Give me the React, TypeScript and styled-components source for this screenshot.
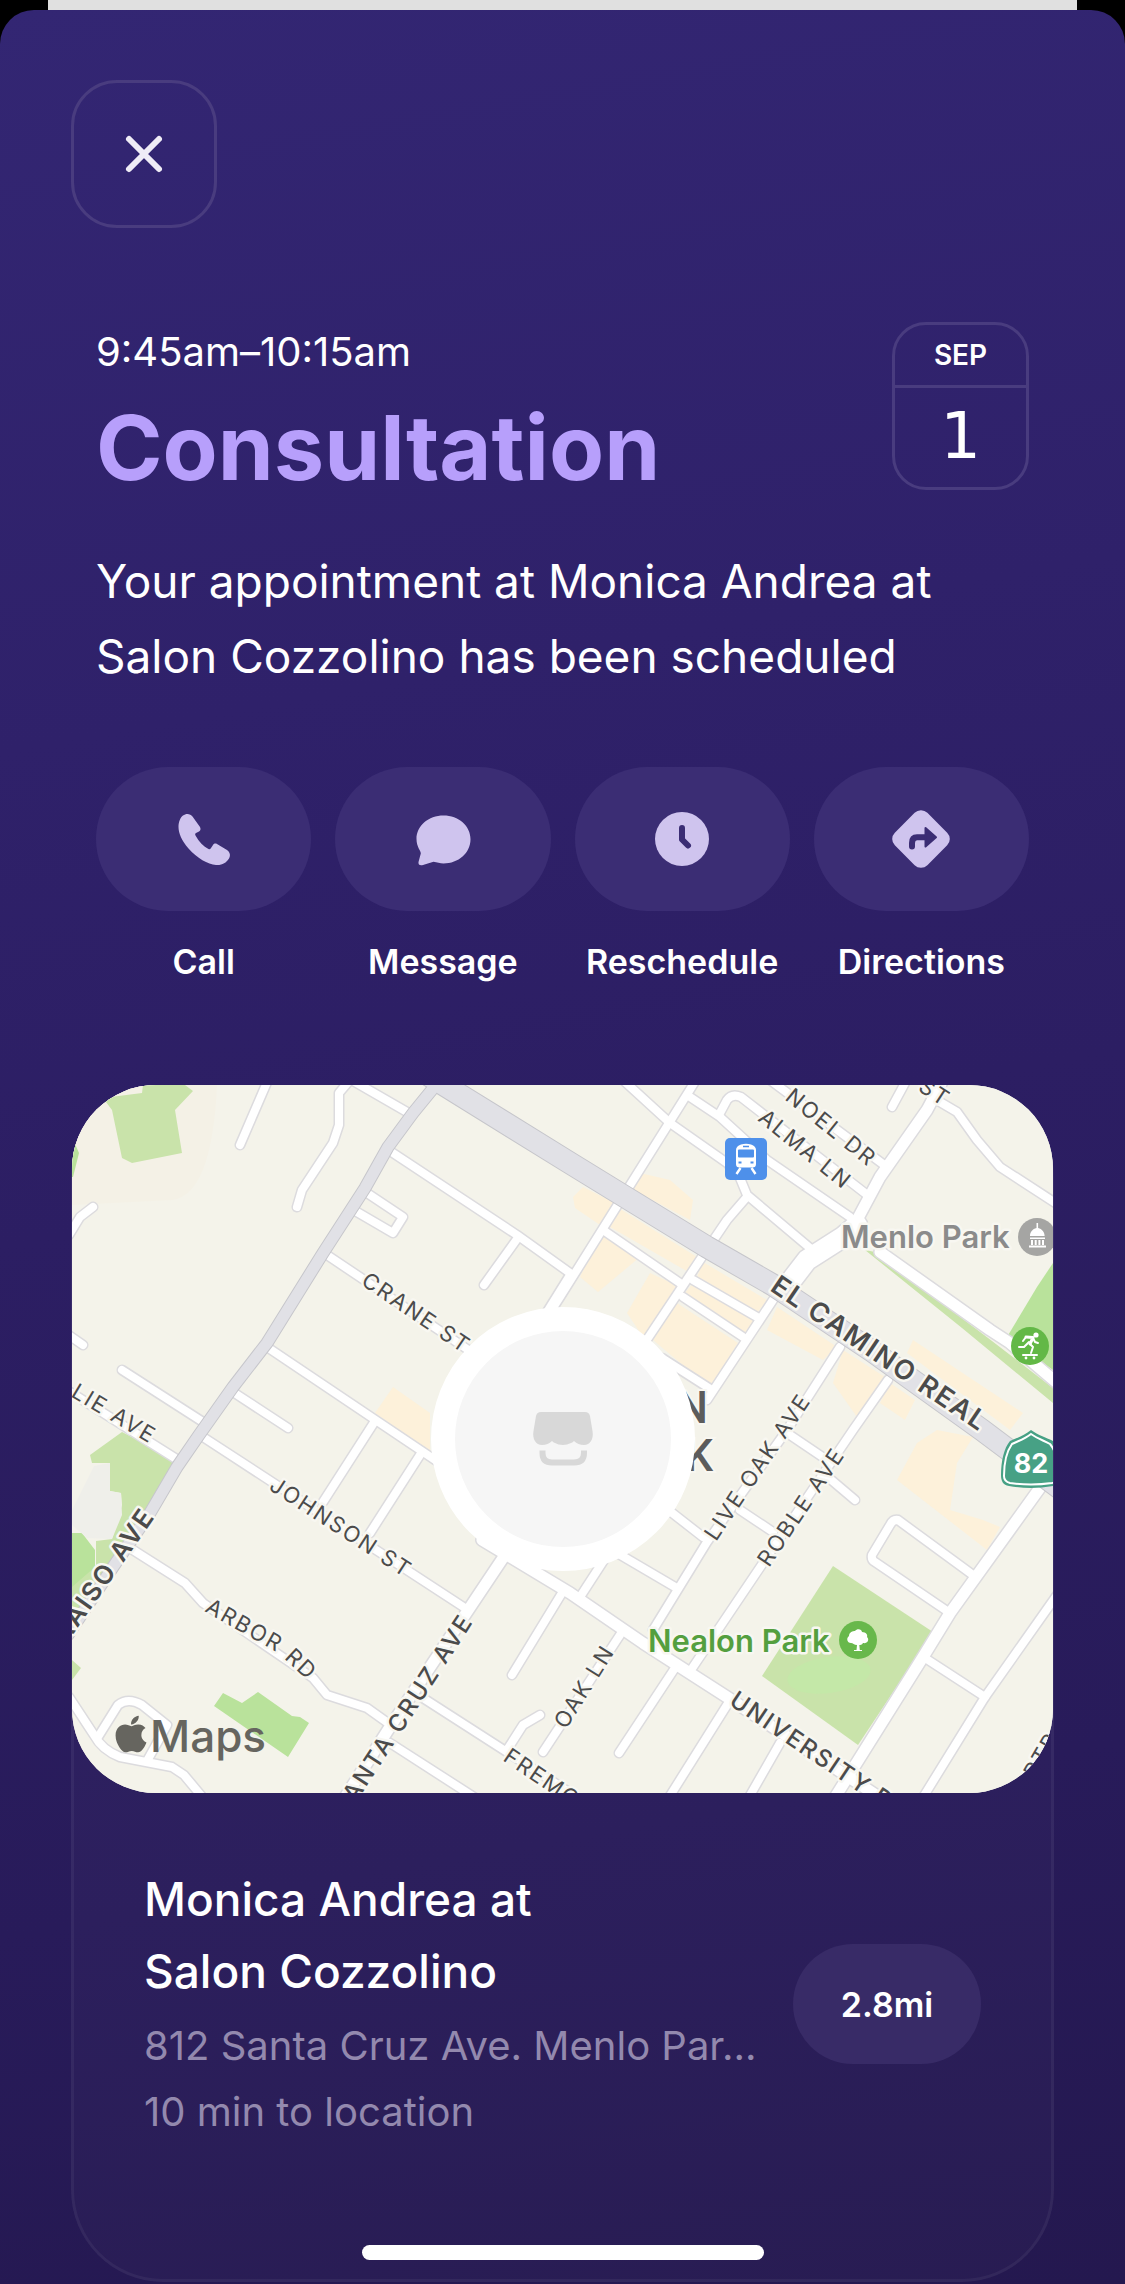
import React from "react";
import styled, { createGlobalStyle } from "styled-components";
import { FaApple } from "react-icons/fa";

const GlobalStyle = createGlobalStyle`
  *, *::before, *::after { box-sizing: border-box; }
  body {
    margin: 0;
    background: #000;
    color: #fff;
    font-family: Inter, "Liberation Sans", sans-serif;
    -webkit-font-smoothing: antialiased;
  }
  h1, h2, p { margin: 0; }
  button { font: inherit; color: inherit; }
`;

const Screen = styled.div`
  position: relative;
  display: flex;
  flex-direction: column;
  min-height: 100vh;
`;

const PreviousSheet = styled.div`
  height: 10px;
  margin: 0 48px;
  background: #e0e0e0;
`;

const Sheet = styled.main`
  flex: 1;
  display: flex;
  flex-direction: column;
  padding: 70px 71px 2px;
  border-radius: 34px 34px 0 0;
  background: linear-gradient(170deg, #332673 0%, #2f216a 30%, #2c1e63 50%, #281b5a 78%, #24184f 100%);
`;

const CloseButton = styled.button`
  display: grid;
  place-items: center;
  width: 146px;
  height: 148px;
  padding: 0;
  border: 3px solid #493c7f;
  border-radius: 46px;
  background: transparent;
  cursor: pointer;
`;

const Summary = styled.section`
  display: flex;
  flex-direction: column;
  padding: 94px 25px 0;
`;

const Heading = styled.header`
  display: flex;
  justify-content: space-between;
  align-items: flex-start;
`;

const Titles = styled.div`
  display: flex;
  flex-direction: column;
  gap: 24px;
  padding-top: 6px;
`;

const Time = styled.p`
  font-size: 40px;
  line-height: 48px;
`;

const Title = styled.h1`
  color: #b79ffb;
  font-size: 90px;
  font-weight: 700;
  line-height: 96px;
`;

const DateBadge = styled.time`
  display: flex;
  flex-direction: column;
  width: 137px;
  height: 168px;
  border: 3px solid #493c7f;
  border-radius: 34px;
  text-align: center;
`;

const Month = styled.span`
  border-bottom: 3px solid #493c7f;
  font-size: 28px;
  font-weight: 600;
  line-height: 60px;
`;

const Day = styled.span`
  font-family: "DejaVu Sans", sans-serif;
  font-size: 64px;
  line-height: 96px;
`;

const Message = styled.p`
  padding-top: 48px;
  font-size: 46px;
  line-height: 75px;
`;

const Actions = styled.nav`
  display: grid;
  grid-template-columns: repeat(4, 1fr);
  gap: 24px;
  padding-top: 73px;
`;

const ActionButton = styled.button`
  display: flex;
  flex-direction: column;
  align-items: stretch;
  gap: 31px;
  min-width: 0;
  padding: 0;
  border: 0;
  background: transparent;
  font-size: 34px;
  font-weight: 600;
  line-height: 40px;
  white-space: nowrap;
  cursor: pointer;
`;

const Pill = styled.span`
  display: grid;
  place-items: center;
  height: 144px;
  border-radius: 72px;
  background: #3b2d74;
  color: #cfc4ee;
`;

const Card = styled.section`
  display: flex;
  flex-direction: column;
  margin-top: 103px;
  border-radius: 92px;
  background: rgba(255, 255, 255, 0.02);
  box-shadow: inset 0 0 0 3px rgba(255, 255, 255, 0.05);
`;

const MapFrame = styled.div`
  position: relative;
  aspect-ratio: 981 / 708;
  margin: 0 1px;
  border-radius: 84px;
  overflow: hidden;
  background: #f4f3ea;
`;

const MapDrawing = styled.svg`
  display: block;
  width: 100%;
  height: 100%;
  font-family: Inter, "Liberation Sans", sans-serif;
`;

const Marker = styled.div`
  position: absolute;
  inset: 0;
  width: 264px;
  height: 264px;
  margin: auto;
  display: grid;
  place-items: center;
  border: 24px solid #fff;
  border-radius: 50%;
  background: #f6f6f6;
  color: #d8d8d8;
`;

const Place = styled.div`
  display: flex;
  align-items: center;
  justify-content: space-between;
  gap: 36px;
  padding: 70px 73px 137px;
`;

const PlaceText = styled.div`
  min-width: 0;
`;

const PlaceName = styled.h2`
  padding-bottom: 6px;
  font-size: 46px;
  font-weight: 500;
  line-height: 72px;
`;

const PlaceLine = styled.p`
  color: #9389ae;
  font-size: 40px;
  line-height: 66px;
  white-space: nowrap;
`;

const Distance = styled.button`
  flex: none;
  width: 188px;
  height: 120px;
  padding: 0;
  border: 0;
  border-radius: 60px;
  background: #382b67;
  font-size: 34px;
  font-weight: 600;
  cursor: pointer;
`;

const HomeIndicator = styled.div`
  position: absolute;
  bottom: 24px;
  left: 50%;
  width: 402px;
  height: 15px;
  margin-left: -201px;
  border-radius: 8px;
  background: #fff;
`;

const Icon = ({ children }: { children: React.ReactNode }) => (
  <svg width="64" height="64" viewBox="0 0 64 64" fill="currentColor" aria-hidden="true">
    {children}
  </svg>
);

const actions = [
  {
    label: "Call",
    icon: (
      <path d="M11 8.500 C14 6 18.500 6.500 20.500 9.500 L28 20 C29 22 28.500 23.500 27 24.500 L24 26 C23 26.500 23 27.500 23.500 28.500 C27 35 31.500 39.500 36.500 42 C38 42.500 38.500 42 39 41 L41 38 C42 36.500 43.500 36.300 45 37 L55 43 C58.500 45.500 58.500 49 57 51.500 C54 56 50 58.500 44 58 C36 57.500 25 51 16.500 41.500 C9.500 33.500 6.500 26 6.500 20 C6.500 14.500 8.500 10.500 11 8.500 Z" />
    ),
  },
  {
    label: "Message",
    icon: (
      <path d="M32.500 8.500 C47.500 8.500 59.500 18.800 59.500 32.300 C59.500 46 47.500 56.500 32.500 56.500 C29 56.500 26 55.500 22.500 54.800 L12 58 C9 59 7 57.500 7.500 55 L9.800 46.500 C9.800 43.500 5.500 40 5.500 32 C5.500 18.800 17.500 8.500 32.500 8.500 Z" />
    ),
  },
  {
    label: "Reschedule",
    icon: (
      <>
        <circle cx="32" cy="32" r="27" />
        <path d="M32 21 V32.500 L38 38.500" fill="none" stroke="#3b2d74" strokeWidth="6" strokeLinecap="round" strokeLinejoin="round" />
      </>
    ),
  },
  {
    label: "Directions",
    icon: (
      <>
        <rect x="9" y="9" width="46" height="46" rx="9" transform="rotate(45 32 32)" />
        <path d="M23 39.500 V36 C23 32 25 30.300 28 30.300 H38" fill="none" stroke="#3b2d74" strokeWidth="6" strokeLinecap="round" />
        <path d="M36.500 21 L47 30.300 L36.500 39.500 Z" fill="#3b2d74" stroke="#3b2d74" strokeWidth="2" strokeLinejoin="round" />
      </>
    ),
  },
];

const commercial = [
  "568,88 598,95 621,115 618,135 558,103",
  "501,112 511,102 541,117 531,142 503,123",
  "545,122 625,172 618,188 538,142",
  "528,148 568,172 526,207 508,192",
  "578,188 608,202 571,252 555,228",
  "631,177 695,215 685,228 625,192",
  "621,198 685,235 673,252 613,208",
  "605,218 666,258 638,303 581,255",
  "705,222 765,262 751,275 695,245",
  "771,265 813,292 798,315 785,332 761,298",
  "818,298 843,315 833,335 808,318",
  "841,255 951,328 938,345 835,268",
  "845,358 865,345 901,352 885,378 878,425 911,435 928,442 915,465 825,395",
  "321,302 358,328 358,368 303,328",
];

const parks = [
  "31,13 70,8 71,0 113,0 121,6 103,25 110,68 60,78 50,73 40,25",
  "50,347 105,375 60,455 0,535 0,500 24,480 24,456 40,454 50,420 49,408 38,406 38,378 20,378 18,370",
  "0,575 9,583 0,595",
  "761,481 861,547 786,660 690,591",
  "793,165 803,167 850,203 920,256 981,303 981,318 890,243",
];

const gardens = [
  "0,52 7,68 1,92 0,92",
  "0,448 10,448 23,465 23,482 0,502",
  "151,608 170,618 186,607 220,631 228,632 237,638 216,672 142,621",
  "981,178 965,202 935,252 981,285",
];

const streets = [
  "M196 -5 L168 60",
  "M278 -5 L267 8 V40 L261 58 L230 105 L225 122",
  "M283 -3 L335 27",
  "M321 68 L445 150 L498 188",
  "M445 154 L412 200",
  "M498 190 L470 235",
  "M295 108 L331 132 L321 148 L285 127",
  "M255 170 L401 268",
  "M195 262 L308 338 L375 383",
  "M303 336 L251 417",
  "M348 370 L298 448",
  "M161 307 L216 343",
  "M50 285 L131 337",
  "M-5 249 L11 260",
  "M-3 150 L8 132 L21 122",
  "M-5 305 L106 375",
  "M131 352 L393 523",
  "M61 465 L113 498 L131 518 L241 593 L255 610 L295 623 L316 638",
  "M318 658 L405 714",
  "M351 613 L435 667 L520 722",
  "M490 508 L440 590",
  "M468 630 L451 640 L435 665",
  "M471 667 L548 550",
  "M603 583 L547 668",
  "M655 620 L596 714",
  "M708 658 L676 714",
  "M545 455 L508 512",
  "M540 465 L603 502",
  "M590 420 L631 452",
  "M581 545 L635 457 L715 345 L768 262",
  "M621 582 L691 478 L781 345 L816 295",
  "M668 425 L701 447",
  "M718 350 L755 375 M757 393 L783 415",
  "M901 490 L826 435 Q821 434 818 440 L800 470 Q799 475 803 477 L878 528",
  "M985 510 L913 612 L850 714",
  "M853 573 L913 612",
  "M551 -5 L598 38 L655 78 L668 93 L675 110 L738 163",
  "M624 -5 L488 212 L470 240",
  "M618 12 L648 32 L695 75 L778 132",
  "M648 28 L655 15 Q660 8 669 12 L798 112",
  "M698 -5 L815 82",
  "M833 -2 L820 22",
  "M868 17 L885 27 L905 55 L928 82 L985 119",
  "M674 113 L655 135 L630 172 L570 262",
  "M531 145 L608 198 M621 195 L685 232",
  "M611 212 L671 252",
  "M590 273 L640 305",
  "M701 215 L635 315",
  "M-3 612 L22 650 Q30 665 48 672 L100 682 L112 690 L132 714",
  "M26 652 L46 620 Q56 612 70 620 L95 640 L75 676",
];

const avenues = [
  "M871 -5 L855 25 L808 92 L785 135",
  "M808 167 L918 245 L938 258 L985 298",
  "M450 445 L431 473 L316 645 L272 714",
  "M410 455 L498 508 L571 558 L655 612 L810 714",
  "M970 400 L878 528 L851 572 L762 714",
];

const parkway = "M372 -10 L341 28 L316 62 L293 103 L251 168 L195 258 L161 302 L127 350 L105 382 L78 428 L41 482 L-4 550";
const highway = "M350 -14 L372 0 L498 78 L555 113 L635 162 L701 200 L800 266 L910 345 L990 405";
const crossing = "M785 140 L771 152 L735 175 L712 205";

type Label = [text: string, x: number, y: number, angle: number, size: number, weight: number, anchor: "start" | "end"];

const labels: Label[] = [
  ["CRANE ST", 288, 199, 34, 22, 400, "start"],
  ["LIE AVE", -2, 311, 31, 22, 400, "start"],
  ["JOHNSON ST", 196, 404, 33, 22, 400, "start"],
  ["SANTA CRUZ AVE", 402, 536, -57, 24, 500, "end"],
  ["RAISO AVE", 84, 431, -55, 26, 600, "end"],
  ["FREMO", 430, 675, 34, 22, 400, "start"],
  ["OAK LN", 494, 645, -58, 22, 400, "start"],
  ["LIVE OAK AVE", 644, 457, -56, 22, 400, "start"],
  ["ROBLE AVE", 697, 483, -56, 22, 400, "start"],
  ["UNIVERSITY D", 656, 619, 34, 24, 500, "start"],
  ["EL CAMINO REAL", 697, 205, 34, 27, 600, "start"],
  ["NOEL DR", 712, 14, 39, 22, 400, "start"],
  ["ALMA LN", 685, 35, 39, 22, 400, "start"],
  ["ST", 845, 5, 33, 22, 400, "start"],
  ["RTR", 964, 695, -60, 22, 400, "start"],
];

const AreaMap = () => (
  <MapDrawing viewBox="0 0 981 708" preserveAspectRatio="xMidYMid slice" role="img" aria-label="Map of Menlo Park">
    <rect width="981" height="708" fill="#f4f3ea" />
    <path d="M0 0 H145 Q140 110 100 115 L0 120 Z" fill="#f4f1e6" />
    <g fill="#fdf1da">{commercial.map((p) => <polygon key={p} points={p} />)}</g>
    <g fill="#c9e3aa">{parks.map((p) => <polygon key={p} points={p} />)}</g>
    <g fill="#b9e29b">{gardens.map((p) => <polygon key={p} points={p} />)}</g>
    <ellipse cx="757" cy="590" rx="42" ry="18" fill="#c4e8a8" transform="rotate(-8 757 590)" />
    <polygon points="22,381 38,378 38,406 49,408 50,430 40,454 15,453 0,440 0,425" fill="#efefea" />

    <g fill="none" strokeLinecap="round" strokeLinejoin="round">
      <g stroke="#dcdbde">
        <g strokeWidth="11">{streets.map((d) => <path key={d} d={d} />)}</g>
        <g strokeWidth="14">{avenues.map((d) => <path key={d} d={d} />)}</g>
        <path d={crossing} strokeWidth="23" />
      </g>
      <g stroke="#fff">
        <g strokeWidth="8">{streets.map((d) => <path key={d} d={d} />)}</g>
        <g strokeWidth="11">{avenues.map((d) => <path key={d} d={d} />)}</g>
        <path d={crossing} strokeWidth="20" />
      </g>
      <g stroke="#c6c6cb">
        <path d={parkway} strokeWidth="13" />
        <path d={highway} strokeWidth="23" />
      </g>
      <g stroke="#e1e1e6">
        <path d={parkway} strokeWidth="11" />
        <path d={highway} strokeWidth="21" />
      </g>
    </g>

    <g fill="#4b4b4b" stroke="#f8f7f1" strokeWidth="5" strokeLinejoin="round" paintOrder="stroke" letterSpacing="2">
      {labels.map(([text, x, y, angle, size, weight, anchor]) => (
        <text key={text} transform={`translate(${x} ${y}) rotate(${angle})`} fontSize={size} fontWeight={weight} textAnchor={anchor}>
          {text}
        </text>
      ))}
      <path id="arbor" d="M132 526 L206 568 L262 620" fill="none" stroke="none" />
      <text fontSize="22">
        <textPath href="#arbor">ARBOR RD</textPath>
      </text>
    </g>

    <g fill="#5c5c5c" stroke="#f8f7f1" strokeWidth="4" paintOrder="stroke" fontFamily="Roboto, sans-serif" fontSize="44" fontWeight="500" textAnchor="end">
      <text x="636" y="338">N</text>
      <text x="641" y="386">K</text>
    </g>

    <g stroke="#f8f7f1" strokeWidth="5" strokeLinejoin="round" paintOrder="stroke" fontSize="31" fontWeight="600">
      <text x="769" y="163" fill="#8b8b8b">Menlo Park</text>
      <text x="576" y="567" fill="#549f3f">Nealon Park</text>
    </g>

    <circle cx="965" cy="152" r="19" fill="#a5a5a3" />
    <g fill="#fff">
      <path d="M964.500 138 h1.600 v5 c4 1 6.500 4 6.500 8 h-14.600 c0 -4 2.500 -7 6.500 -8 Z" />
      <path d="M958 152.500 h15 v1.500 h-15 Z M959 155 h2 v5 h-2 Z M962.700 155 h2 v5 h-2 Z M966.400 155 h2 v5 h-2 Z M970 155 h2 v5 h-2 Z M957 160.500 h17 v2 h-17 Z" />
    </g>

    <circle cx="786" cy="555" r="19" fill="#68b84b" />
    <path d="M784.500 565 L785 560 C782 560 781 558 779 558 C775 558 774 553 777 551 C777 547 781 546 783 546 C785 543 790 544 790 547 C794 547 796 550 795 552 C798 555 795 559 791 558 C790 560 788 560 787.300 560 L787.800 565 H790 V566 H782 V565 Z" fill="#fff" />

    <circle cx="958" cy="261" r="19" fill="#63b846" />
    <circle cx="964" cy="250" r="2.600" fill="#fff" />
    <path d="M954 252 L961 252.500 L958 259" fill="none" stroke="#fff" strokeWidth="3" strokeLinecap="round" strokeLinejoin="round" />
    <path d="M947 262 L952 262 L957 257 M958 259 L961 262 L959 268 M954 252 L951 256 M961 253 L963 257 L966 258 M951 270 H965" fill="none" stroke="#fff" strokeWidth="2" strokeLinecap="round" strokeLinejoin="round" />
    <circle cx="954" cy="273" r="1.400" fill="#fff" />
    <circle cx="962" cy="273" r="1.400" fill="#fff" />

    <rect x="653" y="53" width="42" height="42" rx="5" fill="#4e90ea" />
    <path d="M669 59.500 Q674 58 679 59.500 Q684 61 684 65 V79 Q684 82.500 680.500 82.500 H667.500 Q664 82.500 664 79 V65 Q664 61 669 59.500 Z" fill="#fff" />
    <path d="M671 61.500 h6" stroke="#4e90ea" strokeWidth="1.500" />
    <rect x="666" y="64.500" width="16" height="8" rx="1" fill="#4e90ea" />
    <path d="M666.500 77.500 h3 M678.500 77.500 h3" stroke="#4e90ea" strokeWidth="2" />
    <path d="M668.500 83 L664.500 89 M679.500 83 L683.500 89" stroke="#fff" strokeWidth="2.400" />

    <path d="M959 345 C966 350 975 353 981 356 C987 363 990 376 990 392 C989 398 986 401 981 401 Q959 405 937 401 C931 400 929 396 929 390 C929 376 932 363 938 356 C945 353 953 350 959 345 Z" fill="#47a185" />
    <path d="M959 349 C966 354 973 356 978 359 C984 366 986 378 986 391 C986 396 984 397 980 398 Q959 401 938 398 C934 397 932 395 932 391 C932 378 935 366 940 359 C946 356 953 354 959 349 Z" fill="none" stroke="#fff" strokeWidth="2" />
    <text x="959" y="388" fill="#fff" fontSize="27" fontWeight="700" textAnchor="middle">82</text>

    <g fill="#66655f">
      <FaApple x="38" y="628" size={42} color="#66655f" />
      <text x="78" y="667" fontSize="44" fontWeight="500">Maps</text>
    </g>
  </MapDrawing>
);

export default function App() {
  return (
    <>
      <GlobalStyle />
      <Screen>
        <PreviousSheet />
        <Sheet>
          <CloseButton type="button" aria-label="Close">
            <svg width="40" height="40" viewBox="0 0 40 40" fill="none" stroke="#efecf6" strokeWidth="6" strokeLinecap="round" aria-hidden="true">
              <path d="M5 5 L35 35 M35 5 L5 35" />
            </svg>
          </CloseButton>

          <Summary>
            <Heading>
              <Titles>
                <Time>9:45am–10:15am</Time>
                <Title>Consultation</Title>
              </Titles>
              <DateBadge dateTime="09-01">
                <Month>SEP</Month>
                <Day>1</Day>
              </DateBadge>
            </Heading>
            <Message>
              Your appointment at Monica Andrea at
              <br />
              Salon Cozzolino has been scheduled
            </Message>
            <Actions aria-label="Appointment actions">
              {actions.map(({ label, icon }) => (
                <ActionButton key={label} type="button">
                  <Pill>
                    <Icon>{icon}</Icon>
                  </Pill>
                  {label}
                </ActionButton>
              ))}
            </Actions>
          </Summary>

          <Card>
            <MapFrame>
              <AreaMap />
              <Marker>
                <Icon>
                  <path d="M10 5 H54 Q58 5 59 9 L61.500 24 C63 32 59 38 53 38 Q47 38 43 34 Q41 36 40 36 Q36 38 32 38 Q27 38 24 36 Q23 36 21 34 Q17 38 11 38 C5 38 1 32 2.500 24 L5 9 Q6 5 10 5 Z" />
                  <path d="M11.500 43.500 V46 Q11.500 55.500 21 55.500 H43 Q53 55.500 53 46 V43.500" fill="none" stroke="currentColor" strokeWidth="6" />
                </Icon>
              </Marker>
            </MapFrame>
            <Place>
              <PlaceText>
                <PlaceName>
                  Monica Andrea at
                  <br />
                  Salon Cozzolino
                </PlaceName>
                <PlaceLine>812 Santa Cruz Ave. Menlo Par...</PlaceLine>
                <PlaceLine>10 min to location</PlaceLine>
              </PlaceText>
              <Distance type="button">2.8mi</Distance>
            </Place>
          </Card>
        </Sheet>
        <HomeIndicator />
      </Screen>
    </>
  );
}
